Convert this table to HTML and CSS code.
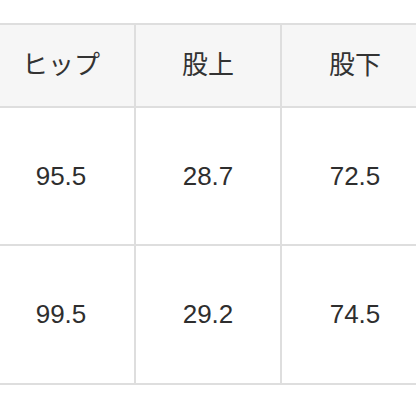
FILE: index.html
```html
<!DOCTYPE html>
<html lang="ja">
<head>
<meta charset="utf-8">
<link rel="stylesheet" href="styles.css">
</head>
<body>
<div class="wrap">
  <div class="grid">
    <div class="cell head">ヒップ</div>
    <div class="cell head">股上</div>
    <div class="cell head">股下</div>
    <div class="cell num">95.5</div>
    <div class="cell num">28.7</div>
    <div class="cell num">72.5</div>
    <div class="cell num">99.5</div>
    <div class="cell num">29.2</div>
    <div class="cell num">74.5</div>
  </div>
</div>
</body>
</html>
```
FILE: styles.css
```css
html, body {
  margin: 0;
  padding: 0;
  background: #fff;
  overflow: hidden;
}
.wrap {
  padding-top: 23px;
  width: 416px;
  overflow: hidden;
}
.grid {
  margin-left: -14px;
  width: 444px;
  display: grid;
  grid-template-columns: 146px 144px 146px;
  grid-template-rows: 81px 136px 137px;
  gap: 2px;
  padding: 2px;
  background: #dedede;
}
.cell {
  display: flex;
  align-items: center;
  justify-content: center;
  color: #333;
  font-family: "Liberation Sans", "Noto Sans CJK JP", sans-serif;
  font-size: 25px;
  background: #fff;
}
.head {
  background: #f6f6f6;
  font-family: "Noto Sans CJK JP", sans-serif;
  font-size: 26px;
  font-weight: 400;
  padding-bottom: 6px;
}
.num {
  font-size: 26px;
  color: #2e2e2e;
}
```
